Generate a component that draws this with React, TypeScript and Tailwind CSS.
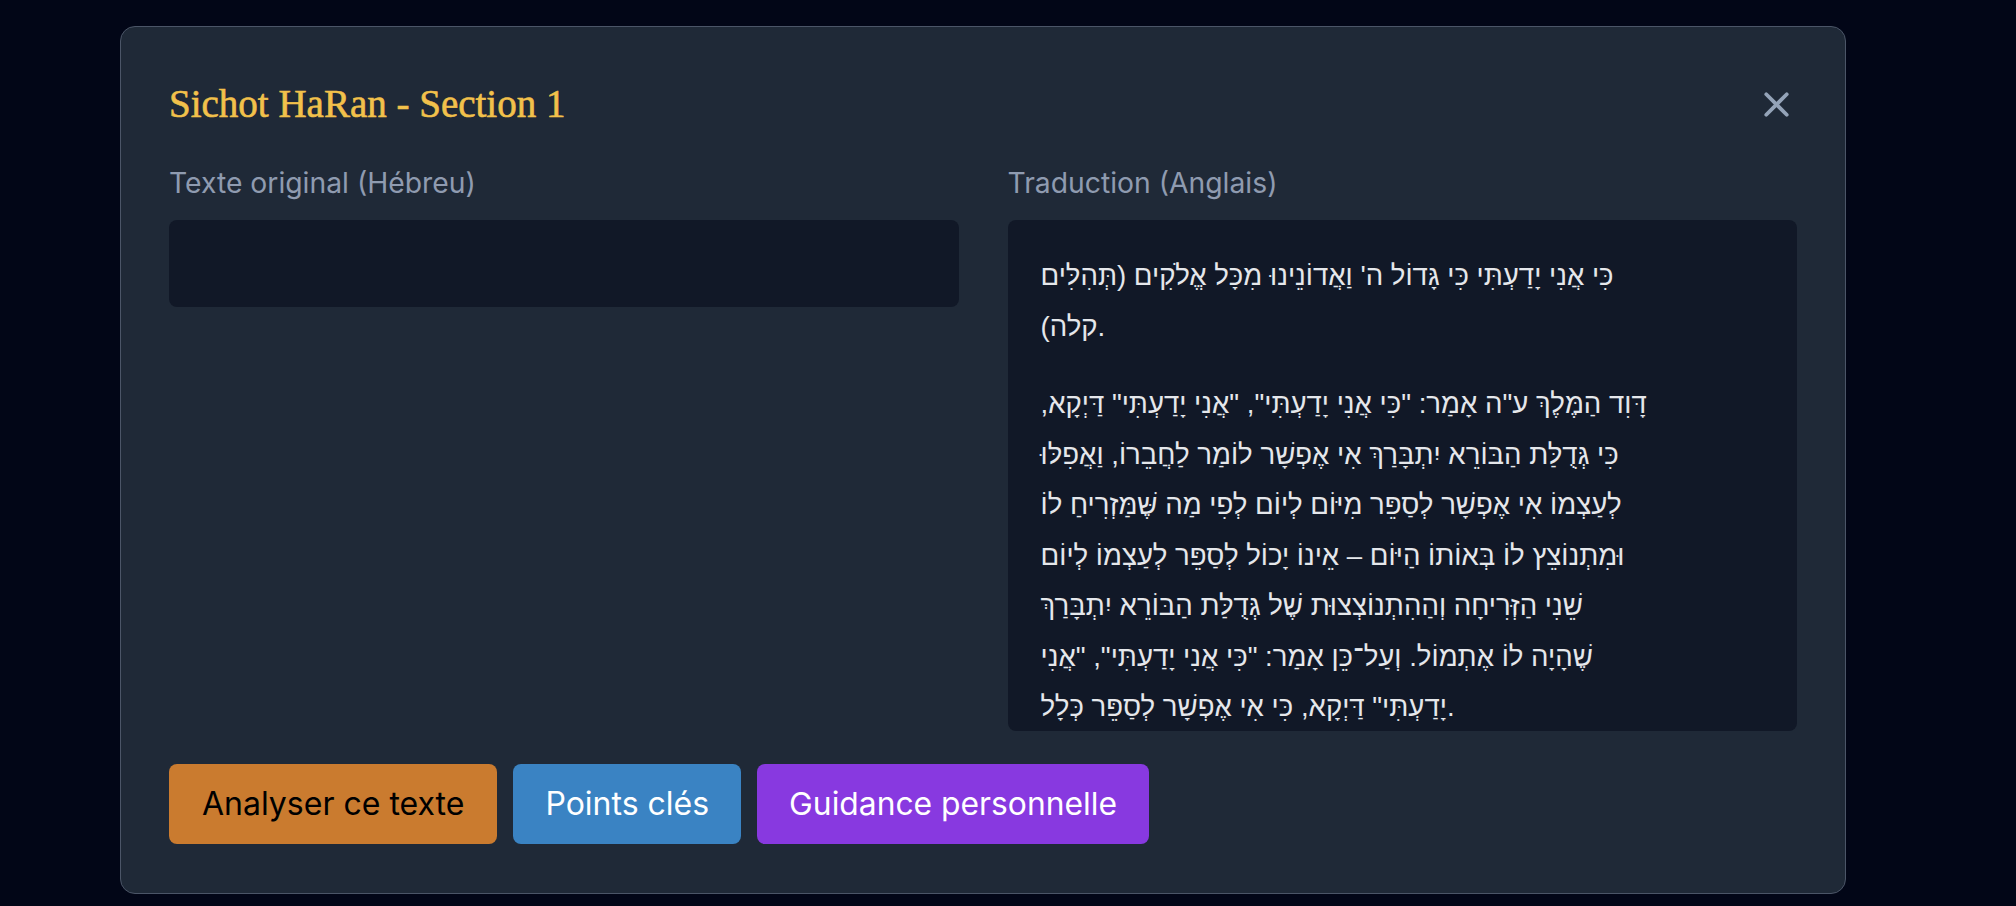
import React from 'react';
import { X } from 'lucide-react';

// each entry is one rendered line; RLM keeps trailing punctuation on the Hebrew side
const translation: string[][] = [
  [
    `כִּי אֲנִי יָדַעְתִּי כִּי גָּדוֹל ה' וַאֲדוֹנֵינוּ מִכָּל אֱלֹקִים (תְּהִלִּים`,
    `קלה)\u200F.`,
  ],
  [
    `דָּוִד הַמֶּלֶךְ ע"ה אָמַר: "כִּי אֲנִי יָדַעְתִּי", "אֲנִי יָדַעְתִּי" דַּיְקָא,\u200F`,
    `כִּי גְּדֻלַּת הַבּוֹרֵא יִתְבָּרַךְ אִי אֶפְשָׁר לוֹמַר לַחֲבֵרוֹ, וַאֲפִלּוּ`,
    `לְעַצְמוֹ אִי אֶפְשָׁר לְסַפֵּר מִיּוֹם לְיוֹם לְפִי מַה שֶּׁמַּזְרִיחַ לוֹ`,
    `וּמִתְנוֹצֵץ לוֹ בְּאוֹתוֹ הַיּוֹם – אֵינוֹ יָכוֹל לְסַפֵּר לְעַצְמוֹ לְיוֹם`,
    `שֵׁנִי הַזְּרִיחָה וְהַהִתְנוֹצְצוּת שֶׁל גְּדֻלַּת הַבּוֹרֵא יִתְבָּרַךְ`,
    `שֶׁהָיָה לוֹ אֶתְמוֹל. וְעַל־כֵּן אָמַר: "כִּי אֲנִי יָדַעְתִּי", "אֲנִי`,
    `יָדַעְתִּי" דַּיְקָא, כִּי אִי אֶפְשָׁר לְסַפֵּר כְּלָל.`,
  ],
];

const App: React.FC = () => {
  return (
    <div className="min-h-screen bg-[#020617] pt-[26px] pl-[120px] font-['Inter',sans-serif]">
      <div className="w-[1726px] h-[868px] rounded-[15px] border border-[#4b5567] bg-[#1f2937] p-12">
        {/* Header */}
        <div className="flex items-center justify-between h-[58px]">
          <h2 className="font-['Liberation_Serif',serif] text-[39px] leading-[44px] text-[#f2c14b] [-webkit-text-stroke:0.6px_#f2c14b]">
            Sichot HaRan - Section 1
          </h2>
          <button className="text-[#94a3b8]">
            <X size={41} strokeWidth={2.2} />
          </button>
        </div>

        <div className="mt-[29px] grid grid-cols-2 gap-[49px] items-start">
          {/* Original column */}
          <div>
            <label className="block text-[28.3px] leading-[43px] text-[#8f9bb0] mb-[15px]">
              Texte original (Hébreu)
            </label>
            <textarea
              className="block w-full h-[87px] resize-none rounded-lg bg-[#111827] p-4 outline-none"
              readOnly
            />
          </div>

          {/* Translation column */}
          <div>
            <label className="block text-[28.3px] leading-[43px] text-[#8f9bb0] mb-[15px]">
              Traduction (Anglais)
            </label>
            <div className="h-[511px] overflow-hidden rounded-lg bg-[#111827] px-[33px] pt-[31px]">
              {translation.map((para, i) => (
                <div key={i} className="mb-[27px]">
                  {para.map((line, j) => (
                    <div
                      key={j}
                      className="whitespace-nowrap font-['Liberation_Sans',sans-serif] text-[27.6px] leading-[50.5px] text-[#e5e7eb]"
                    >
                      {line}
                    </div>
                  ))}
                </div>
              ))}
            </div>
          </div>
        </div>

        {/* Actions */}
        <div className="mt-[33px] flex gap-4">
          <button className="h-[80px] px-[33px] rounded-lg bg-[#ca7b2f] text-[32px] text-black">
            Analyser ce texte
          </button>
          <button className="h-[80px] px-[32px] rounded-lg bg-[#3a83c3] text-[32px] text-white">
            Points clés
          </button>
          <button className="h-[80px] px-[32px] rounded-lg bg-[#8839e0] text-[31.8px] text-white">
            Guidance personnelle
          </button>
        </div>
      </div>
    </div>
  );
};

export default App;
